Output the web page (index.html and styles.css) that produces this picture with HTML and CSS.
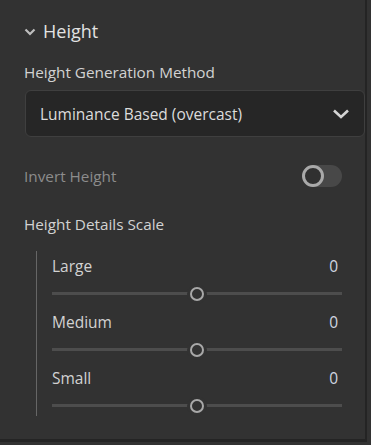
FILE: index.html
```html
<!DOCTYPE html>
<html lang="en">
  <head>
    <meta charset="UTF-8" />
    <meta name="viewport" content="width=device-width, initial-scale=1.0" />
    <title>Height</title>
    <link rel="stylesheet" href="styles.css">
  </head>
  <body>
    <div class="panel">
      <div class="section-header">
        <svg class="caret" width="12" height="8" viewBox="0 0 12 8">
          <path d="M1.5 1.5 L6 6 L10.5 1.5" fill="none" stroke="#bdbdbd" stroke-width="2.2" />
        </svg>
        <span>Height</span>
      </div>

      <div class="field-label">Height Generation Method</div>
      <div class="dropdown">
        <span>Luminance Based (overcast)</span>
        <svg width="18" height="12" viewBox="0 0 18 12">
          <path d="M2 2.5 L9 9 L16 2.5" fill="none" stroke="#d4d4d4" stroke-width="2.6" />
        </svg>
      </div>

      <div class="toggle-row">
        <span class="muted">Invert Height</span>
        <div class="toggle">
          <div class="knob"></div>
        </div>
      </div>

      <div class="field-label details-label">Height Details Scale</div>
      <div class="slider-group">
        <div class="slider">
          <div class="slider-head"><span>Large</span><span class="value">0</span></div>
          <div class="track"><div class="thumb"></div></div>
        </div>
        <div class="slider">
          <div class="slider-head"><span>Medium</span><span class="value">0</span></div>
          <div class="track"><div class="thumb"></div></div>
        </div>
        <div class="slider">
          <div class="slider-head"><span>Small</span><span class="value">0</span></div>
          <div class="track"><div class="thumb"></div></div>
        </div>
      </div>
    </div>
  </body>
</html>
```

FILE: styles.css
```css
* {
  margin: 0;
  padding: 0;
  box-sizing: border-box;
}

body {
  background-color: #323232;
  color: #d2d2d2;
  font-family: "Open Sans", "Noto Sans", sans-serif;
  font-size: 15px;
  overflow: hidden;
}

.panel {
  width: 367px;
  height: 442px;
  border-right: 2px solid #242424;
  border-bottom: 3px solid #242424;
  padding: 19px 2px 0 24px;
}

.section-header {
  display: flex;
  align-items: center;
  height: 24px;
  gap: 7px;
  font-size: 18px;
  color: #e2e2e2;
}

.caret {
  margin-top: 1px;
}

.field-label {
  margin-top: 19px;
  height: 20px;
  line-height: 20px;
  font-size: 15.3px;
}

.dropdown {
  margin-top: 8px;
  margin-left: 1px;
  height: 47px;
  width: 340px;
  background-color: #262626;
  border: 1px solid #3f3f3f;
  border-radius: 6px;
  display: flex;
  align-items: center;
  justify-content: space-between;
  padding: 0 14px 0 14px;
  font-size: 15.5px;
  color: #dcdcdc;
}

.toggle-row {
  margin-top: 28px;
  width: 318px;
  display: flex;
  align-items: center;
  justify-content: space-between;
  height: 22px;
  font-size: 15.3px;
}

.muted {
  color: #8c8c8c;
}

.toggle {
  width: 39px;
  height: 22px;
  border-radius: 11px;
  background-color: #484848;
  position: relative;
}

.knob {
  position: absolute;
  left: -1px;
  top: 0;
  width: 22px;
  height: 22px;
  border-radius: 50%;
  background-color: #303030;
  border: 3px solid #a9a9a9;
}

.details-label {
  margin-top: 27px;
}

.slider-group {
  margin-top: 17px;
  margin-left: 12px;
  width: 306px;
  border-left: 1px solid #666;
  padding: 5px 0 2px 15px;
  display: flex;
  flex-direction: column;
  gap: 10px;
}

.slider {
  display: flex;
  flex-direction: column;
  gap: 10px;
}

.slider-head {
  display: flex;
  justify-content: space-between;
  height: 20px;
  line-height: 20px;
  font-size: 15.5px;
  padding-right: 4px;
}

.value {
  color: #cfd6e0;
}

.track {
  height: 16px;
  display: flex;
  align-items: center;
  justify-content: center;
  position: relative;
}

.track::before {
  content: "";
  position: absolute;
  left: 0;
  right: 0;
  top: 6px;
  height: 3px;
  background-color: #4d4d4d;
}

.thumb {
  position: relative;
  width: 14px;
  height: 14px;
  border-radius: 50%;
  background-color: #323232;
  border: 2.5px solid #a8a8a8;
  box-shadow: 0 0 0 3px #323232;
}
```
